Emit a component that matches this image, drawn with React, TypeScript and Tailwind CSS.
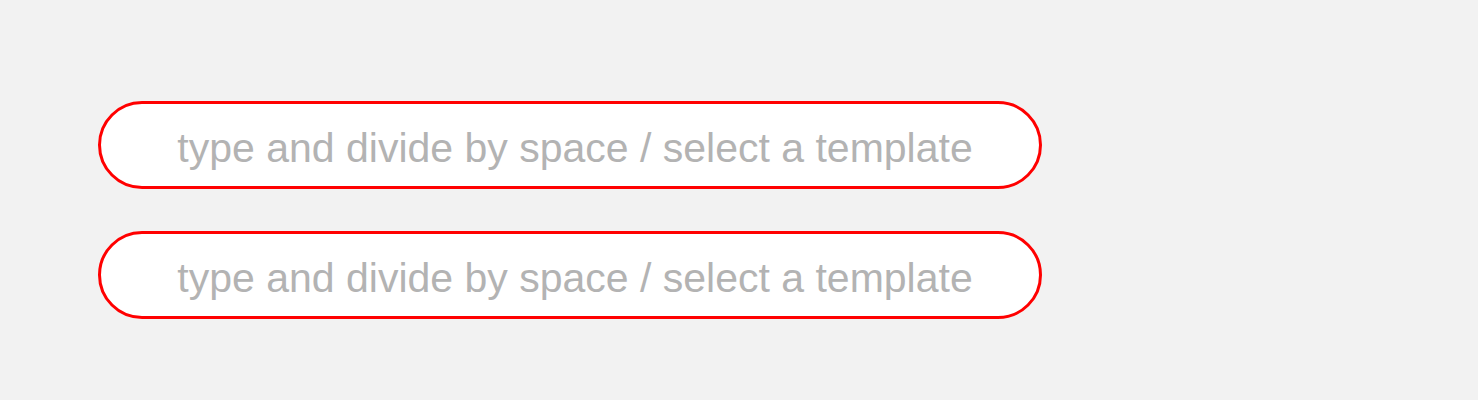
import React from 'react';

const TagInput = () => (
  <div className="flex h-[88px] w-[944px] items-center rounded-full border-[3px] border-solid border-[#ff0000] bg-white">
    <input
      type="text"
      placeholder="type and divide by space / select a template"
      className="h-full w-full rounded-full bg-transparent pl-[10px] pt-[6px] text-center text-[41px] text-[#555] placeholder:text-[#b3b3b3] outline-none"
      style={{ fontFamily: '"Liberation Sans", Arial, sans-serif' }}
    />
  </div>
);

const App = () => {
  return (
    <div className="w-[1478px] h-[400px] bg-[#f2f2f2] pt-[101px] pl-[98px]">
      <div className="flex flex-col gap-[42px]">
        <TagInput />
        <TagInput />
      </div>
    </div>
  );
};

export default App;
